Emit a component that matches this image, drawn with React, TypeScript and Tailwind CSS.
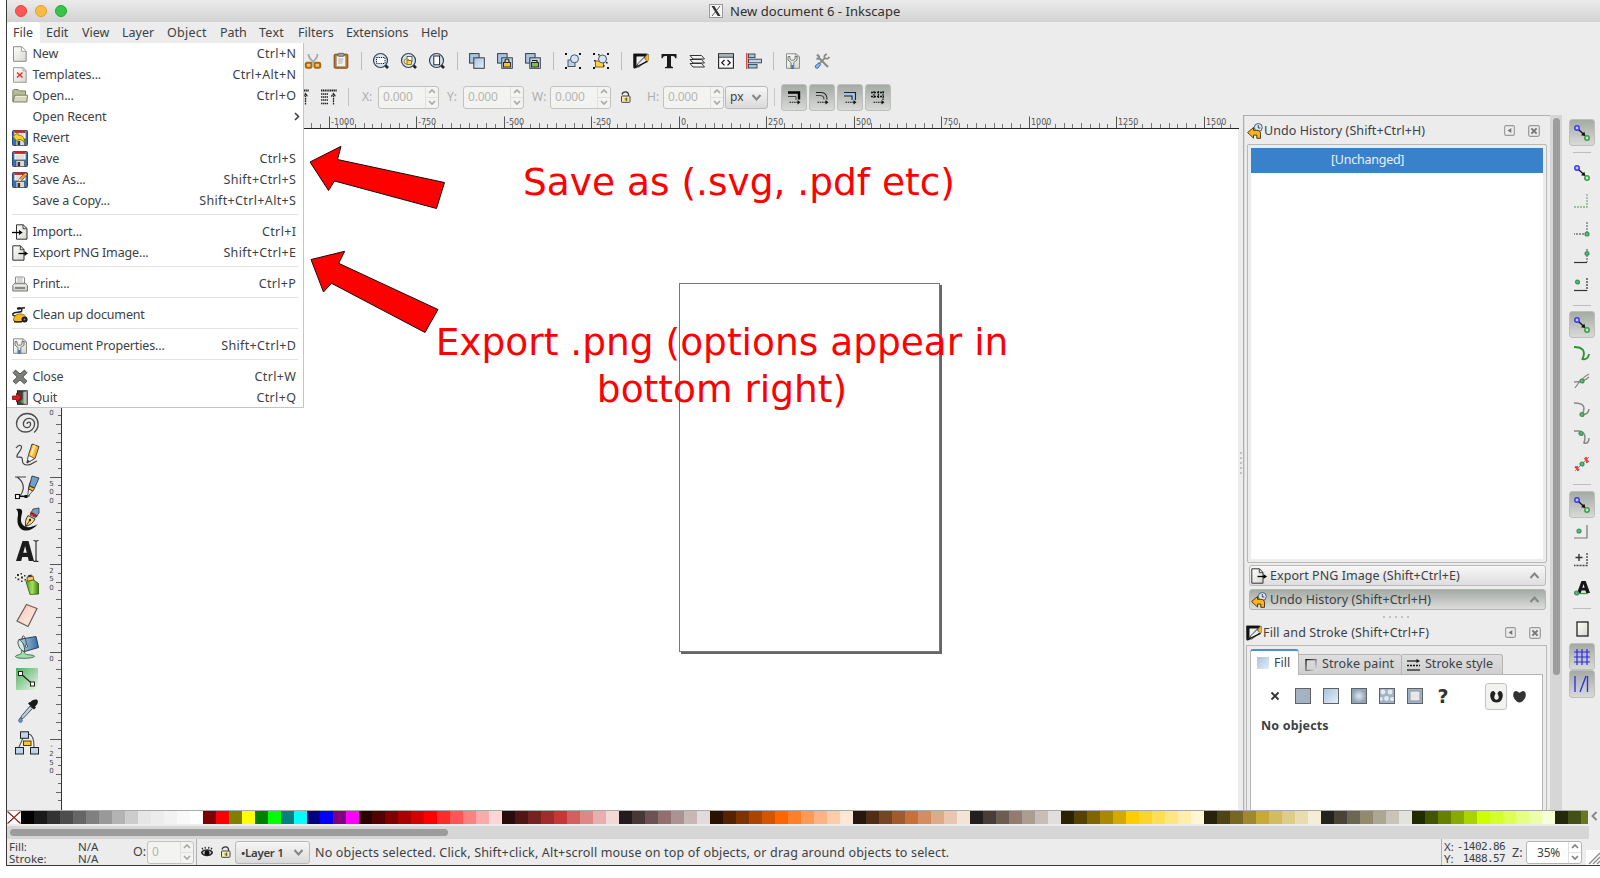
import React from 'react';
import type { ReactNode } from 'react';

/* ---------- drawing helpers ---------- */

function Svg({ s = 16, vb = 16, children }: { s?: number; vb?: number; children: ReactNode }) {
  return (
    <svg width={s} height={s} viewBox={`0 0 ${vb} ${vb}`} fill="none" className="block shrink-0 overflow-visible">
      {children}
    </svg>
  );
}

const Gradients = () => (
  <svg width="0" height="0" className="absolute">
    <defs>
      <linearGradient id="blue" x1="0" y1="0" x2="1" y2="1">
        <stop offset="0" stopColor="#a9c2dc" />
        <stop offset="1" stopColor="#e4eef8" />
      </linearGradient>
      <linearGradient id="page" x1="0" y1="0" x2="1" y2="1">
        <stop offset="0" stopColor="#fff" />
        <stop offset="1" stopColor="#d6d6d0" />
      </linearGradient>
      <linearGradient id="green" x1="0" y1="0" x2="1" y2="1">
        <stop offset="0" stopColor="#4fae5c" />
        <stop offset="1" stopColor="#eaf7ea" />
      </linearGradient>
      <linearGradient id="spray" x1="0" y1="0" x2="1" y2="0">
        <stop offset="0" stopColor="#4f9a1c" />
        <stop offset="0.5" stopColor="#a5e060" />
        <stop offset="1" stopColor="#3c8210" />
      </linearGradient>
      <linearGradient id="ink" x1="0" y1="0" x2="1" y2="1">
        <stop offset="0" stopColor="#000" />
        <stop offset="0.6" stopColor="#333" />
        <stop offset="1" stopColor="#fff" />
      </linearGradient>
      <linearGradient id="skin" x1="0" y1="0" x2="1" y2="1">
        <stop offset="0" stopColor="#f8c8b8" />
        <stop offset="1" stopColor="#fdeee8" />
      </linearGradient>
      <linearGradient id="bucket" x1="0" y1="0" x2="1" y2="0">
        <stop offset="0" stopColor="#b9d6ea" />
        <stop offset="1" stopColor="#2f6da0" />
      </linearGradient>
      <linearGradient id="frame" x1="0" y1="0" x2="1" y2="1">
        <stop offset="0" stopColor="#111" />
        <stop offset="1" stopColor="#ddd" />
      </linearGradient>
      <radialGradient id="radial">
        <stop offset="0" stopColor="#dfe8f2" />
        <stop offset="1" stopColor="#8fa1b5" />
      </radialGradient>
    </defs>
  </svg>
);

/* ---------- menu icons ---------- */

const NewIcon = () => (
  <Svg>
    <path d="M1.5.7h8.3l4.4 4.4v10.2H1.5z" fill="url(#page)" stroke="#8b8d88" />
    <path d="M9.6.9v4.4h4.4" fill="#fff" stroke="#9a9c97" strokeWidth=".9" />
  </Svg>
);
const TemplateIcon = () => (
  <Svg>
    <path d="M1.5.7h9.8l2.9 2.9v11.7H1.5z" fill="url(#page)" stroke="#9a9c97" />
    <path d="M11 .9v3h3" stroke="#9a9c97" strokeWidth=".8" />
    <path d="M5 5.5l5.5 5M10.5 5.5L5 10.5" stroke="#f03030" strokeWidth="1.5" />
  </Svg>
);
const FolderIcon = () => (
  <Svg>
    <path d="M.8 13.8V2.5l1-1h4.4l1 1.4h6.3V8" fill="#b8bc9a" stroke="#7c8062" />
    <path d="M2.6 7.2h12.9l-.6 6.8H1.2z" fill="#d3d6b8" stroke="#7c8062" />
    <path d="M3.4 8.4h11" stroke="#f0f1e2" />
  </Svg>
);
const Floppy = ({ children }: { children?: ReactNode }) => (
  <Svg>
    <rect x=".5" y=".5" width="15" height="15" rx="1" fill="#3d6fae" stroke="#254a7d" />
    <rect x="2.4" y=".9" width="11.2" height="7.6" fill="#f3f3f3" />
    <rect x="2.4" y=".5" width="11.2" height="2.4" fill="#d42020" />
    <path d="M4 5h8M4 7h8" stroke="#bbb" strokeWidth=".7" />
    <rect x="4" y="9.6" width="8.4" height="5.9" fill="#d8dadc" stroke="#555" strokeWidth=".7" />
    <rect x="5.6" y="11" width="2.5" height="4" fill="#333" />
    {children}
  </Svg>
);
const SaveIcon = () => <Floppy />;
const RevertIcon = () => (
  <Floppy>
    <path d="M1 6.500l5-4v2.700c4 0 6.500 1.500 6.500 7.800-1.500-3-3-3.500-6.500-3.500v2.600z" fill="#f4d428" stroke="#8c7a10" strokeWidth=".9" />
  </Floppy>
);
const SaveAsIcon = () => (
  <Floppy>
    <path d="M6.500 9.500l1-3L13.500.5l2 2-6 6z" fill="#eb9d3c" stroke="#6e4410" strokeWidth=".7" />
    <path d="M6.500 9.500l1-3 2 2z" fill="#fae3c0" />
  </Floppy>
);
const ImportIcon = () => (
  <Svg>
    <path d="M4.500.8h6.700l3.800 3.700v10.700H4.500z" fill="url(#page)" stroke="#333" />
    <path d="M11 .8v3.900h3.900" stroke="#333" strokeWidth=".9" />
    <path d="M0 8.500h8" stroke="#000" strokeWidth="1.300" />
    <path d="M7 6l3.700 2.500L7 11z" fill="#000" />
  </Svg>
);
const ExportIcon = () => (
  <Svg>
    <path d="M.8.8h7.700l3.500 3.700v10.700H.8z" fill="url(#page)" stroke="#333" />
    <path d="M8.300.8v3.900h3.700" stroke="#333" strokeWidth=".9" />
    <path d="M6.500 8.500h7" stroke="#000" strokeWidth="1.300" />
    <path d="M12.500 6l3.500 2.500-3.500 2.500z" fill="#000" />
  </Svg>
);
const PrintIcon = () => (
  <Svg>
    <path d="M3.500 7.500V1h8l1 1v5.500z" fill="#fafafa" stroke="#8b8d88" />
    <path d="M5 3h5.500M5 5h5.500" stroke="#999" strokeWidth=".8" />
    <path d="M.8 9.500l2-2.300h10.700l2 2.300v5.500H.8z" fill="#d2d4cf" stroke="#777974" />
    <path d="M3 12h10" stroke="#555" strokeWidth="1.200" />
    <path d="M1.500 9.700h13" stroke="#f5f5f5" />
  </Svg>
);
const VacuumIcon = () => (
  <Svg>
    <path d="M5 1.500l8-.8M10 1l-.5 3.500c-2 1-7 .5-8.500 2-1 2 1.500 3 4 2" stroke="#222" strokeWidth="1.500" />
    <path d="M5.500 1.500h3" stroke="#111" strokeWidth="2.200" />
    <path d="M1.500 13.500c0-4 3-7 7.500-6.500 4 .3 6 3 6 7l-10 1z" fill="#fbb917" stroke="#7a5400" strokeWidth=".8" />
    <circle cx="12.500" cy="12.600" r="3" fill="#1a1a1a" />
    <circle cx="12.500" cy="12.600" r="1" fill="#888" />
    <path d="M2 14.800h8" stroke="#222" strokeWidth="1.500" />
  </Svg>
);
const DocPropsIcon = () => (
  <Svg>
    <path d="M1.500.8h9.500l3.500 3v11.500h-13z" fill="url(#page)" stroke="#8b8d88" />
    <path d="M10.800.8v3h3.500" stroke="#8b8d88" strokeWidth=".8" />
    <path d="M3 3.500v3.600L6 9.500v6h2.800v-6L12 7V3.500L10 3.500V6L8.500 7.200H6.500L5 6V3.500z" fill="#e6e8e5" stroke="#696b67" strokeWidth=".9" />
    <path d="M6.200 12h2.300v3.500H6.200z" fill="#3b76d6" />
  </Svg>
);
const CloseXIcon = () => (
  <Svg>
    <path d="M3.500 1L8 5l4.500-4L15 3.800 10.800 8l4.200 4.200-2.700 2.600L8 11l-4.300 3.800L1 12.200 5.200 8 1 3.800z" fill="#7c7e79" stroke="#4b4d49" strokeWidth=".9" />
  </Svg>
);
const QuitIcon = () => (
  <Svg>
    <rect x="5.500" y=".8" width="9.700" height="13.500" fill="#3f413d" stroke="#222" />
    <path d="M11 2l4-1v14l-4-1.500z" fill="#b9bbb6" stroke="#666" strokeWidth=".7" />
    <path d="M8 12l3-3v4.500z" fill="#4f9a3c" />
    <path d="M.5 6h4V3.200L9.500 7.500l-5 4.500V9.500h-4z" fill="#e01b1b" stroke="#7d0b0b" strokeWidth=".8" />
  </Svg>
);

/* ---------- command bar icons ---------- */

const CutIcon = () => (
  <Svg>
    <path d="M3.500 1c0 4 3 7 7 9.500M12.500 1c0 4-3 7-7 9.500" stroke="#a9aba8" strokeWidth="1.800" />
    <rect x=".8" y="9.800" width="5.700" height="5" rx="1.500" stroke="#a8690c" strokeWidth="2" fill="#ecc37c" />
    <rect x="9.500" y="9.800" width="5.700" height="5" rx="1.500" stroke="#a8690c" strokeWidth="2" fill="#ecc37c" />
  </Svg>
);
const PasteIcon = () => (
  <Svg>
    <rect x="1.200" y="1.200" width="13.600" height="14" rx="1" fill="#b9782a" stroke="#7c4c10" />
    <path d="M3.500 3h9v10.500h-9z" fill="#f2f2ee" stroke="#999" strokeWidth=".6" />
    <path d="M5.200 6h5M5.200 8h5M5.200 10h4" stroke="#999" strokeWidth=".8" />
    <rect x="5" y=".3" width="6" height="3" rx="1" fill="#a0a29e" stroke="#555" strokeWidth=".7" />
  </Svg>
);
const ZoomBase = ({ children }: { children: ReactNode }) => (
  <Svg>
    <path d="M11.500 11.500l3.500 3.500" stroke="#222" strokeWidth="2.600" />
    <circle cx="7.500" cy="7.500" r="7" fill="#d7e5f2" stroke="#33414e" strokeWidth="1.200" />
    {children}
  </Svg>
);
const ZoomSel = () => (
  <ZoomBase>
    <rect x="3.500" y="4.500" width="8.500" height="6" stroke="#111" strokeDasharray="1.200 1" fill="#fff" />
  </ZoomBase>
);
const ZoomDraw = () => (
  <ZoomBase>
    <rect x="6" y="3.500" width="5" height="5" fill="#fff" stroke="#444" strokeWidth=".8" />
    <circle cx="5.600" cy="8.500" r="2.600" fill="#fce9b0" stroke="#a06c00" strokeWidth=".9" />
    <rect x="6" y="7.500" width="4.500" height="4" fill="#fbd25c" stroke="#8c5e00" strokeWidth=".8" />
  </ZoomBase>
);
const ZoomPage = () => (
  <ZoomBase>
    <rect x="4.800" y="3" width="5.800" height="8.800" fill="#fff" stroke="#222" />
  </ZoomBase>
);
const Dup = ({ children }: { children?: ReactNode }) => (
  <Svg>
    <rect x=".6" y=".6" width="9.500" height="9.500" fill="#a9c4de" stroke="#333f4a" />
    <rect x="4.800" y="4.800" width="10.500" height="10.500" fill="url(#blue)" stroke="#333f4a" />
    {children}
  </Svg>
);
const DupLock = () => (
  <Dup>
    <path d="M8 9.500V8a2 2 0 014 0v1.500" stroke="#222" strokeWidth="1.200" />
    <rect x="6.500" y="9.500" width="7" height="4.500" fill="#f9c52e" stroke="#222" strokeWidth=".9" />
  </Dup>
);
const DupUnlock = () => (
  <Dup>
    <path d="M7 7.500h5v2" stroke="#222" strokeWidth="1.200" />
    <rect x="6.500" y="9.500" width="7" height="4.500" fill="#7cc04a" stroke="#222" strokeWidth=".9" />
  </Dup>
);
const corners = 'M0 0h2v2H0zM14 0h2v2h-2zM0 14h2v2H0zM14 14h2v2h-2z';
const GroupIcon = () => (
  <Svg>
    <rect x="3" y="7" width="7" height="6.500" fill="#bcd2e8" stroke="#44586c" />
    <circle cx="9.500" cy="5.800" r="4" fill="#d5e4f2" stroke="#44586c" />
    <path d={corners} fill="#111" />
  </Svg>
);
const UngroupIcon = () => (
  <Svg>
    <rect x="2.500" y="8" width="8" height="6" fill="#fbd34a" stroke="#8c6400" />
    <circle cx="9.500" cy="6" r="4" fill="#d5e4f2" stroke="#44586c" />
    <path d={corners} fill="#111" />
    <path d="M5 1h1.600v1.600H5zM1 7h1.600v1.600H1zM13 9h1.600v1.600H13zM10 12h1.600v1.600H10z" fill="#222" />
  </Svg>
);
const FillStrokeIcon = () => (
  <Svg>
    <path d="M.5.8h14.500L3 15.300H.5z" fill="url(#ink)" />
    <path d="M.5.8h13l-2 2H3v9l-2.500 3z" fill="#111" />
    <path d="M3.500 3.500h8l-8 9z" fill="#eceff2" />
    <path d="M5 10.500l6-6 3 3-8 6.500H3.500z" fill="#e8ecf0" stroke="#333" strokeWidth=".8" />
    <path d="M12 4.500L15.500 1v6.500l-2 1z" fill="#f5b921" stroke="#76560a" strokeWidth=".5" />
    <path d="M1 15c4-2 8-4 13.500-6.700" stroke="#111" strokeWidth="1.300" />
  </Svg>
);
const TextIcon = () => (
  <Svg>
    <path d="M.5 1h15v4.200h-1.300c-.3-1.500-1-2.200-2.400-2.200H10v9.500c0 1 .5 1.400 2 1.500v1.200H4V14c1.500 0 2-.5 2-1.500V3H4.200C2.800 3 2.100 3.700 1.800 5.200H.5z" fill="#1b1b1b" />
  </Svg>
);
const LayersIcon = () => (
  <Svg>
    <path d="M1 10.500l3 3.500h11.500l-3-3.500zM1 6.500l3 3.500h11.500l-3-3.500zM1 2.500L4 6h11.500l-3-3.500z" fill="#f4f4f4" stroke="#333" strokeWidth="1" />
  </Svg>
);
const XmlIcon = () => (
  <Svg>
    <rect x=".6" y=".8" width="14.800" height="14.400" fill="#f8f8f8" stroke="#222" strokeWidth="1.100" />
    <path d="M1.200 2.800h13.600" stroke="#9fb8d2" strokeWidth="2" />
    <path d="M1 4.200h14" stroke="#222" strokeWidth=".9" />
    <path d="M6.500 7L3.800 9.700l2.700 2.700M9.500 7l2.700 2.700-2.700 2.700" stroke="#111" strokeWidth="1.200" />
  </Svg>
);
const AlignIcon = () => (
  <Svg>
    <path d="M.8 0v16" stroke="#e02020" strokeWidth="1.200" />
    <rect x="2.500" y="1" width="6.500" height="3.600" fill="#a9c2dc" stroke="#333f4a" strokeWidth=".9" />
    <rect x="2.500" y="6.200" width="13" height="3.600" fill="#c2d5e8" stroke="#333f4a" strokeWidth=".9" />
    <rect x="2.500" y="11.400" width="8.500" height="3.600" fill="#a9c2dc" stroke="#333f4a" strokeWidth=".9" />
  </Svg>
);
const ToolsIcon = () => (
  <Svg>
    <path d="M3 1.500l2 2-.5 2-2 .3M4.500 4.500l9.500 9.500" stroke="#8b8d89" strokeWidth="2.200" />
    <path d="M13 1.200c-3 .5-3 2.300-2.300 4L4 12M11 5.200c1.700.8 3.500.8 4.200-1.500" stroke="#888a86" strokeWidth="1.700" />
    <path d="M1.500 12.500L5 9.800l1.700 1.700L4 15c-2 .8-3.300-.5-2.500-2.500z" fill="#8fb6ea" stroke="#2c5da4" strokeWidth=".9" />
  </Svg>
);
const StackIcon = () => (
  <Svg>
    <path d="M0 1.500h16" stroke="#222" strokeWidth="2.200" strokeDasharray="1.300 .5" />
    <path d="M0 5h7M0 8h7M0 11h7M0 14.500h7" stroke="#222" strokeWidth="1.600" strokeDasharray="1.400 .5" />
    <path d="M12.500 15.500V5M10.300 7.500l2.200-3 2.200 3" stroke="#222" strokeWidth="1.300" strokeDasharray="1.800 .6" />
  </Svg>
);
const LockIcon = () => (
  <Svg s={12} vb={12}>
    <path d="M2 3.500c.5-2 2-2.700 3.500-2.700 2 0 3 1 3 3V5" stroke="#333" strokeWidth="1.200" />
    <rect x="1.500" y="5" width="8.500" height="6.300" rx=".6" fill="#f7ecb0" stroke="#444" strokeWidth="1" />
    <rect x="4.600" y="7" width="1.600" height="2.500" fill="#c49a10" />
    <path d="M6.700 6.500v3.500" stroke="#333" strokeWidth=".9" />
  </Svg>
);
const affect: ReactNode[] = [
  <>
    <path d="M1 2.500h11v7" stroke="#000" strokeWidth="2.400" />
    <path d="M1 6.500h8V10" stroke="#444" strokeWidth="1" />
  </>,
  <>
    <path d="M1 2.500h5c4 0 6 3 6 7" stroke="#222" strokeWidth="1.200" />
    <path d="M1 5.500h4c3 0 4 2 4 4" stroke="#444" strokeWidth="1.200" />
  </>,
  <>
    <path d="M1 2.500h11v7.500H9V6H1z" fill="#9fc0e8" />
    <path d="M1 2.500h11.500V10M1 6h8v4" stroke="#222" strokeWidth="1.100" />
  </>,
  <>
    <path d="M0 2.500h13M0 6.500h13" stroke="#111" strokeWidth="1.700" strokeDasharray="2 1" />
    <path d="M3 1v7M7.500 1v7M12 1v9" stroke="#111" strokeWidth="1.200" strokeDasharray="2 .7" />
  </>,
];
const AffectIcon = ({ i }: { i: number }) => (
  <Svg s={14} vb={14}>
    {affect[i]}
    <path d="M2.500 12.200h9" stroke="#111" strokeWidth="1.100" strokeDasharray="1.500 .8" />
    <path d="M10.500 10l3 2.200-3 2.200z" fill="#111" />
  </Svg>
);
const HistoryIcon = () => (
  <Svg>
    <circle cx="11.300" cy="4.500" r="4" fill="#d5e4f6" stroke="#4c5d74" />
    <path d="M11.300 2v3h2" stroke="#222" strokeWidth=".8" />
    <path d="M.6 9.500L6.500 4.500v2.800h3c2.500 0 4 1.200 4 3v5H9.800v-3.200H6.500v3z" fill="#fbb41c" stroke="#3d2c00" strokeWidth=".9" />
  </Svg>
);

/* ---------- toolbox icons (24px) ---------- */

const toolbox: { key: string; h: string; icon: ReactNode }[] = [
  {
    key: 'spiral',
    h: 'h-[30px]',
    icon: (
      <path
        d="M12 12a1.800 1.800 0 0 1 3.600 0a3.600 3.600 0 0 1-7.200 0a5.600 5.600 0 0 1 11.200 0a9.050 8 0 0 1-18.100 0a10.800 10.500 0 0 1 21.600 0c0 3-1 6-4 8.500"
        stroke="#4a4a4a"
        strokeWidth="1.300"
      />
    ),
  },
  {
    key: 'pencil',
    h: 'h-[32px]',
    icon: (
      <>
        <path d="M1 5c3-4 7-3 5 1s-5 6-4 8c1 1 4-1 5 1s-1 7 5 7c5 0 6-3 10-4" stroke="#444" strokeWidth="1.200" />
        <path d="M12 20l1.500-8L17 1l7 2.500-4 12z" fill="#fbb62a" stroke="#333" strokeWidth=".9" />
        <path d="M15 12L18.500 2l2.500.8-4 10z" fill="#fde9a0" />
        <path d="M12 20l1.500-7.500 6 3z" fill="#fff" stroke="#444" strokeWidth=".7" />
        <path d="M12 20l.8-3 2 1z" fill="#222" />
      </>
    ),
  },
  {
    key: 'bezier',
    h: 'h-[32px]',
    icon: (
      <>
        <path d="M0 2h11M2 2c6 4 9 11 3 19h9c-1-6-1-10 2-15" stroke="#444" strokeWidth="1.200" />
        <rect x=".5" y="19.500" width="4" height="4" fill="#fff" stroke="#111" strokeWidth="1.100" />
        <path d="M5 21.500h5" stroke="#111" strokeWidth="1.100" />
        <rect x="9.500" y="20" width="3" height="3" fill="#111" />
        <path d="M14.500 10.500L17 1l7 2-4.500 10z" fill="#6ba2cf" stroke="#333" strokeWidth=".9" />
        <path d="M14.500 11l5 2.500-1.500 2.500-4.500-2z" fill="#fbb62a" stroke="#333" strokeWidth=".8" />
        <path d="M13.500 14l4 2-5 6z" fill="#f4f4f4" stroke="#333" strokeWidth=".8" />
      </>
    ),
  },
  {
    key: 'calligraphy',
    h: 'h-[32px]',
    icon: (
      <>
        <path d="M1 2c4-1 7 0 6 4-1 5-2 9 1 12 3 3 8 3 15-1-5 6-12 8.500-17 5-4-3.500-4-9-3-14 0-3 0-4-2-6z" fill="#111" />
        <path d="M15 8l3-6 6-1v5l-3.500 4.500z" fill="#6ba2cf" stroke="#333" strokeWidth=".8" />
        <path d="M15.500 5.500l6.500 4" stroke="#b91818" strokeWidth="2.500" />
        <path d="M13 8.500c-2 3-3 5.500-2.500 11 5-1.500 8-4 9.500-7.500z" fill="#fbd98a" stroke="#222" strokeWidth=".9" />
        <path d="M11 19l4-6" stroke="#222" strokeWidth=".9" />
        <circle cx="15" cy="13" r="1.200" fill="#222" />
      </>
    ),
  },
  {
    key: 'text',
    h: 'h-[32px]',
    icon: (
      <>
        <path d="M1 22L7.500 2h6L19 22h-5.200l-1-4H7.200l-1 4zM8.300 13.800h3.500L10.100 7z" fill="#1c1c1c" fillRule="evenodd" />
        <path d="M21 2.500v19M18.500 1.500c1.500 0 2.500.5 2.500 1 0-.5 1-1 2.500-1M18.500 22.500c1.500 0 2.500-.5 2.500-1 0 .5 1 1 2.500 1" stroke="#222" strokeWidth="1.100" />
      </>
    ),
  },
  {
    key: 'spray',
    h: 'h-[32px]',
    icon: (
      <>
        <path d="M11 10.500c2-3 7-3 9-.5l3.500 2.500V23l-8.500.500z" fill="url(#spray)" stroke="#2f5a10" strokeWidth=".8" />
        <path d="M12 6l6-1 .8 4-6.500 1.200z" fill="#f5c65a" stroke="#533a08" strokeWidth=".8" />
        <path d="M13 4.300l3.500-.8.400 2-3.500.8z" fill="#333" />
        <path d="M2 3h2v2H2zM5.500 2h1.500v1.500H5.500zM6 5.500h2v2H6zM2.500 7.500h1.800v1.800H2.500zM9 4h1.500v1.500H9zM6 9.500h1.500V11H6zM9.500 8H11v1.500H9.500zM0 6h1.200v1.200H0z" fill="#333" />
      </>
    ),
  },
  {
    key: 'eraser',
    h: 'h-[32px]',
    icon: <path d="M11.500 1.500l10.500 4-9 18L2 18z" fill="url(#skin)" stroke="#6c5a54" strokeWidth="1.200" />,
  },
  {
    key: 'bucket',
    h: 'h-[32px]',
    icon: (
      <>
        <path d="M7 15c-1 3 0 4-4 5-4 1-4 3.300 6 3.300s14-2.500 7-3.300c-4-.5-6 0-6.500-3z" fill="#9fdcae" stroke="#3c6a48" strokeWidth=".9" />
        <path d="M4 4.500l17-3 2.500 11L9.500 16.500z" fill="url(#bucket)" stroke="#2d3f4f" strokeWidth="1" />
        <path d="M4 4.500c-3 3 1 11.500 5.500 12C10 11 7.500 6 4 4.500z" fill="#d5ecd9" stroke="#2d3f4f" strokeWidth=".9" />
        <path d="M7 5c0-7 4-5 4.500 6" stroke="#444" strokeWidth="1" />
        <circle cx="11.500" cy="11" r="1.300" fill="#eee" stroke="#333" strokeWidth=".8" />
      </>
    ),
  },
  {
    key: 'gradient',
    h: 'h-[32px]',
    icon: (
      <>
        <rect x="1" y="1" width="22" height="22" fill="url(#green)" />
        <path d="M5.500 6.500l12 10.500" stroke="#222" strokeWidth="1.100" />
        <rect x="3.500" y="4.500" width="4" height="4" fill="#fff" stroke="#222" />
        <rect x="15.500" y="15" width="4" height="4" fill="#fff" stroke="#222" />
      </>
    ),
  },
  {
    key: 'dropper',
    h: 'h-[32px]',
    icon: (
      <>
        <path d="M15 3.500c2-2.500 5-3.500 7.500-2.500 1 2.500 0 4.500-2.500 6.500l1 1-2 2-6-6 1.500-1.500z" fill="#1a1a1a" />
        <path d="M15 7l2.500 2.500-9 9.500-3 1.500 1-3.500z" fill="#b7cfe4" stroke="#444" strokeWidth=".9" />
        <path d="M5.500 18.500c-1.800 2-2 2.800-1.600 4 .5 1 2.500 1 3.200 0 .4-1.200 0-2-1.600-4z" fill="#6e9ad0" stroke="#2c4a74" strokeWidth=".8" />
      </>
    ),
  },
  {
    key: 'connector',
    h: 'h-[32px]',
    icon: (
      <>
        <path d="M8 7L4 16M14 3c4 1 5 7 5 13" stroke="#555" strokeWidth="1.100" />
        <rect x="5.500" y=".8" width="8" height="6.500" fill="#bcd5ec" stroke="#222" />
        <rect x="8.500" y="10" width="7.500" height="4.500" fill="#fbc52c" stroke="#543c00" />
        <rect x=".5" y="16.500" width="8" height="6.500" fill="#bcd5ec" stroke="#222" />
        <rect x="15.500" y="16.500" width="8" height="6.500" fill="#bcd5ec" stroke="#222" />
      </>
    ),
  },
];

/* ---------- data ---------- */

type Item = { label: string; keys?: string; icon?: ReactNode; sub?: boolean } | 'sep';

const fileMenu: Item[] = [
  { label: 'New', keys: 'Ctrl+N', icon: <NewIcon /> },
  { label: 'Templates...', keys: 'Ctrl+Alt+N', icon: <TemplateIcon /> },
  { label: 'Open...', keys: 'Ctrl+O', icon: <FolderIcon /> },
  { label: 'Open Recent', sub: true },
  { label: 'Revert', icon: <RevertIcon /> },
  { label: 'Save', keys: 'Ctrl+S', icon: <SaveIcon /> },
  { label: 'Save As...', keys: 'Shift+Ctrl+S', icon: <SaveAsIcon /> },
  { label: 'Save a Copy...', keys: 'Shift+Ctrl+Alt+S' },
  'sep',
  { label: 'Import...', keys: 'Ctrl+I', icon: <ImportIcon /> },
  { label: 'Export PNG Image...', keys: 'Shift+Ctrl+E', icon: <ExportIcon /> },
  'sep',
  { label: 'Print...', keys: 'Ctrl+P', icon: <PrintIcon /> },
  'sep',
  { label: 'Clean up document', icon: <VacuumIcon /> },
  'sep',
  { label: 'Document Properties...', keys: 'Shift+Ctrl+D', icon: <DocPropsIcon /> },
  'sep',
  { label: 'Close', keys: 'Ctrl+W', icon: <CloseXIcon /> },
  { label: 'Quit', keys: 'Ctrl+Q', icon: <QuitIcon /> },
];

const menus: [string, string][] = [
  ['File', 'w-[33px] bg-white rounded-t-[4px]'],
  ['Edit', 'w-[36px]'],
  ['View', 'w-[40px]'],
  ['Layer', 'w-[45px]'],
  ['Object', 'w-[53px] tracking-[0.25px]'],
  ['Path', 'w-[39px]'],
  ['Text', 'w-[39px] tracking-[0.25px]'],
  ['Filters', 'w-[48px]'],
  ['Extensions', 'w-[75px] tracking-[-0.1px]'],
  ['Help', 'w-[37px]'],
];

const palette = (
  '000000 1a1a1a 333333 4d4d4d 666666 808080 999999 b3b3b3 cccccc e6e6e6 ececec f2f2f2 f9f9f9 ffffff ' +
  '800000 ff0000 808000 ffff00 008000 00ff00 008080 00ffff 000080 0000ff 800080 ff00ff ' +
  '2b0000 550000 800000 aa0000 d40000 ff0000 ff2a2a ff5555 ff8080 ffaaaa ffd5d5 ' +
  '280b0b 501616 782121 a02c2c c83737 d35f5f de8787 e9afaf f4d7d7 ' +
  '241c1c 483737 6c5353 916f6f ac9393 c8b7b7 e3dbdb ' +
  '2b1100 552200 803300 aa4400 d45500 ff6600 ff7f2a ff9955 ffb380 ffccaa ffe6d5 ' +
  '28170b 502d16 784421 a05a2c c87137 d38d5f deaa87 e9c6af f4e3d7 ' +
  '241f1c 483e37 6c5d53 917c6f ac9d93 c8beb7 e3dedb ' +
  '2b2200 554400 806600 aa8800 d4aa00 ffcc00 ffd42a ffdd55 ffe680 ffeeaa fff6d5 ' +
  '28220b 504416 786721 a0892c c8ab37 d3bc5f decd87 e9ddaf f4eed7 ' +
  '24221c 484537 6c6753 918a6f aca793 c8c4b7 e3e2db ' +
  '222b00 445500 668000 88aa00 aad400 ccff00 d4ff2a ddff55 e5ff80 eeffaa f6ffd5 ' +
  '23280b 445016 677821'
).split(' ');

/* ---------- small widgets ---------- */

const Slot = ({ children }: { children?: ReactNode }) => (
  <div className="flex w-[28.25px] shrink-0 items-center justify-center">{children}</div>
);
const BarSep = () => (
  <div className="flex w-[11.3px] shrink-0 justify-center">
    <div className="h-[18px] w-px bg-[#bdbdbd]" />
  </div>
);

function Spin({ value, w, live = false, pad = 'pl-[4px]' }: { value: string; w: string; live?: boolean; pad?: string }) {
  return (
    <div
      className={`flex h-[23px] shrink-0 items-stretch rounded-[3px] border ${w} ${
        live ? 'border-[#b4b4b4] bg-white text-[#3c4144]' : 'border-[#c2c2be] bg-[#f3f3f1] text-[#b6b6b3]'
      }`}
    >
      <span className={`flex-1 self-center text-[12px] tracking-[-0.2px] ${pad}`}>{value}</span>
      <span className="flex w-[13px] flex-col items-center justify-evenly border-l border-[#e0e0e0]">
        <svg width="8" height="5" viewBox="0 0 8 5" fill="none">
          <path d="M1 4l3-3 3 3" stroke={live ? '#808080' : '#a9a9a9'} strokeWidth="1.700" />
        </svg>
        <span className="h-px w-full bg-[#e0e0e0]" />
        <svg width="8" height="5" viewBox="0 0 8 5" fill="none">
          <path d="M1 1l3 3 3-3" stroke={live ? '#808080' : '#a9a9a9'} strokeWidth="1.700" />
        </svg>
      </span>
    </div>
  );
}

const Chevron = () => (
  <svg width="11" height="7" viewBox="0 0 11 7" fill="none">
    <path d="M1.500 1l4 4.500 4-4.500" stroke="#858585" strokeWidth="2" />
  </svg>
);

const pressed = 'rounded-[3px] border border-[#bcbfbc] bg-linear-to-b from-[#a5aaa5] to-[#d8dad8]';

function TitleButtons() {
  return (
    <div className="flex gap-[13px]">
      <svg width="11" height="11" viewBox="0 0 12 12" fill="none">
        <rect x=".7" y=".7" width="10.600" height="10.600" rx="1.500" stroke="#999" strokeWidth="1.200" />
        <path d="M8 3.200v5.600L3.800 6z" fill="#777" />
      </svg>
      <svg width="12" height="12" viewBox="0 0 12 12" fill="none">
        <rect x=".7" y=".7" width="10.600" height="10.600" rx="1.500" stroke="#999" strokeWidth="1.200" />
        <path d="M3.400 3.400l5.200 5.200M8.600 3.400L3.400 8.600" stroke="#777" strokeWidth="2" />
      </svg>
    </div>
  );
}

/* ---------- rulers ---------- */

function HRuler() {
  const step = 8.75;
  const ticks: ReactNode[] = [];
  for (let i = -70; i <= 64; i++) {
    const x = Math.round(616.5 + i * step) + 0.5;
    if (x < 0 || x > 1176) continue;
    const major = i % 10 === 0;
    ticks.push(<path key={i} d={`M${x} 13V${major ? 1.5 : i % 2 === 0 ? 8 : 9}`} stroke={major ? '#555' : '#777'} />);
    if (major && x < 1170)
      ticks.push(
        <text key={`t${i}`} x={x + 1.5} y="9.500" fontSize="8" fill="#555" className="font-['DejaVu_Sans']">
          {i * 25}
        </text>,
      );
  }
  return (
    <svg width="1177" height="14" viewBox="0 0 1177 14" className="block">
      {ticks}
      <path d="M0 13.500h1177" stroke="#222" />
    </svg>
  );
}

function VRuler() {
  const step = 8.75;
  const ticks: ReactNode[] = [];
  for (let i = -18; i <= 59; i++) {
    const y = Math.round(522.5 - i * step) + 0.5;
    if (y < 0 || y > 680) continue;
    const major = i % 10 === 0;
    ticks.push(<path key={i} d={`M14 ${y}H${major ? 3 : i % 2 === 0 ? 9 : 11}`} stroke={major ? '#555' : '#666'} />);
    if (major)
      String(i * 25)
        .split('')
        .forEach((c, k) =>
          ticks.push(
            <text key={`t${i}-${k}`} x="4.500" y={y + 8 + k * 8.5} fontSize="7" textAnchor="middle" fill="#444" className="font-['DejaVu_Sans']">
              {c}
            </text>,
          ),
        );
  }
  return (
    <svg width="15" height="681" viewBox="0 0 15 681" className="block">
      {ticks}
      <path d="M14.500 0v681" stroke="#333" />
    </svg>
  );
}

/* ---------- snap bar ---------- */

const NodePair = () => (
  <>
    <path d="M4.500 4.500l6 5.500" stroke="#111" strokeWidth="1.300" />
    <path d="M11.500 11l-4.500-.8 3.300-3.500z" fill="#111" />
    <circle cx="3" cy="3" r="2.200" fill="#c8c8ff" stroke="#3a3aee" strokeWidth="1.500" />
    <circle cx="13" cy="13" r="2.200" fill="#c4e8c4" stroke="#3c9c48" strokeWidth="1.500" />
  </>
);
const GreenDot = ({ x, y }: { x: number; y: number }) => (
  <circle cx={x} cy={y} r="1.900" fill="#7b9ec0" stroke="#3c9c48" strokeWidth="1.400" />
);

const snapItems: { on?: boolean; sep?: boolean; h?: string; el?: ReactNode }[] = [
  { on: true, h: 'h-[27px]', el: <NodePair /> },
  { sep: true, h: 'h-[13px]' },
  { h: 'h-[28px]', el: <NodePair /> },
  { h: 'h-[28px]', el: <path d="M13 1v13H0" stroke="#7db482" strokeWidth="1.300" strokeDasharray="2 1" /> },
  {
    h: 'h-[28px]',
    el: (
      <>
        <path d="M13 1v12H0" stroke="#777" strokeWidth="1.300" strokeDasharray="2 1" />
        <GreenDot x={13} y={13} />
      </>
    ),
  },
  {
    h: 'h-[28px]',
    el: (
      <>
        <path d="M13 0v13" stroke="#666" strokeWidth="1.200" strokeDasharray="2 1" />
        <path d="M0 13.500h13" stroke="#333" strokeWidth="1.200" />
        <GreenDot x={13} y={4.500} />
      </>
    ),
  },
  {
    h: 'h-[28px]',
    el: (
      <>
        <path d="M13 1v12.500" stroke="#333" strokeWidth="1.200" strokeDasharray="2 1" />
        <path d="M0 13.500h13" stroke="#333" strokeWidth="1.200" />
        <GreenDot x={3.5} y={5} />
      </>
    ),
  },
  { sep: true, h: 'h-[12px]' },
  { on: true, h: 'h-[27px]', el: <NodePair /> },
  { h: 'h-[29px]', el: <path d="M0 2c9 0 12 4 8.500 12 3.500 1 6-1 6.500-5" stroke="#2f9438" strokeWidth="1.900" /> },
  {
    h: 'h-[28px]',
    el: (
      <>
        <path d="M0 9c7 0 11-1 15-5M1 15C5 9 9 4 15 1" stroke="#888" strokeWidth="1.300" />
        <GreenDot x={8} y={8} />
      </>
    ),
  },
  {
    h: 'h-[28px]',
    el: (
      <>
        <path d="M0 2c9 0 12 3 8.500 11 3.500 1 6-1 6.500-5" stroke="#888" strokeWidth="1.500" />
        <GreenDot x={8} y={13.5} />
      </>
    ),
  },
  {
    h: 'h-[27px]',
    el: (
      <>
        <path d="M0 2h5c6 1 7 5 5 12 3 1 5-1 5-5" stroke="#888" strokeWidth="1.500" />
        <GreenDot x={7} y={4.5} />
      </>
    ),
  },
  {
    h: 'h-[28px]',
    el: (
      <>
        <path d="M1 15l14-14" stroke="#888" strokeWidth="1" />
        <path d="M1 10.500l4 4M3 10l1 5M10.500 2l4 4M12 1l1 6" stroke="#e04848" strokeWidth="1.900" />
        <GreenDot x={8} y={8} />
      </>
    ),
  },
  { sep: true, h: 'h-[13px]' },
  { on: true, h: 'h-[27px]', el: <NodePair /> },
  {
    h: 'h-[28px]',
    el: (
      <>
        <path d="M13 1v13H0" stroke="#777" strokeWidth="1.200" />
        <GreenDot x={5} y={7} />
      </>
    ),
  },
  {
    h: 'h-[28px]',
    el: (
      <>
        <path d="M13 1v12.500H0" stroke="#444" strokeWidth="1.300" strokeDasharray="2 1" />
        <path d="M5 2v7M1.500 5.500h7" stroke="#333" strokeWidth="1.400" />
      </>
    ),
  },
  {
    h: 'h-[28px]',
    el: (
      <>
        <path d="M3 13L7.500 1h4.200L16 13h-3.800l-.8-2.500H7.500L6.800 13zM8.400 7.800h2.200L9.500 4z" fill="#161616" fillRule="evenodd" />
        <path d="M2 13.500h12" stroke="#3c9c48" strokeWidth="1.300" />
        <GreenDot x={2.500} y={13} />
      </>
    ),
  },
  { sep: true, h: 'h-[13px]' },
  { h: 'h-[28px]', el: <rect x="3" y="1" width="11" height="14" fill="url(#page)" stroke="#222" strokeWidth="1.300" /> },
  { on: true, h: 'h-[27px]', el: <path d="M0 3h16M0 8h16M0 13h16M3 0v16M8 0v16M13 0v16" stroke="#2a2af0" strokeWidth="1.200" /> },
  { on: true, h: 'h-[28px]', el: <path d="M1 0v16M13.500 0v16M6 16l6-16" stroke="#2a2af0" strokeWidth="1.300" /> },
];

/* ---------- page ---------- */

const PaintSwatch = ({ children }: { children?: ReactNode }) => (
  <svg width="18" height="18" viewBox="0 0 18 18" fill="none">
    <rect x="1" y="1" width="16" height="16" fill="#a4b3c4" />
    {children}
    <rect x="1.500" y="1.500" width="15" height="15" stroke="#7a7f86" strokeWidth="1" />
    <rect x="1.500" y="1.500" width="15" height="15" stroke="#444" strokeDasharray="1 1" strokeWidth="1" />
  </svg>
);

const tabBase = 'flex items-center border border-[#b5b5b5] border-l-0 bg-linear-to-b from-[#dedede] to-[#cfcfcf] h-[21px] rounded-tr-[3px]';

export default function App() {
  return (
    <div className="h-[878px] w-[1600px] overflow-hidden bg-white pl-[6px] font-['Noto_Sans',sans-serif] text-[12.5px] leading-none text-[#3c4144]">
      <Gradients />
      <div className="relative flex h-[866px] w-[1594px] flex-col overflow-hidden border-b border-l border-[#3a3a3a] bg-[#ececec]">
        {/* title bar */}
        <div className="relative flex h-[22px] shrink-0 items-center bg-linear-to-b from-[#ebebeb] to-[#d2d2d2] pl-[8px]">
          <div className="flex gap-[8px]">
            <i className="size-[12px] rounded-full border border-[#e2463f] bg-[#fc5753]" />
            <i className="size-[12px] rounded-full border border-[#dfa023] bg-[#fdbc40]" />
            <i className="size-[12px] rounded-full border border-[#24a732] bg-[#33c748]" />
          </div>
          <div className="ml-[642px] flex items-center gap-[7px]">
            <svg width="14" height="14" viewBox="0 0 14 14" fill="none">
              <rect x=".5" y=".5" width="13" height="13" fill="#f6f6f6" stroke="#999" />
              <path d="M2.500 2h2.800l6.200 10H8.700z" fill="#333" />
              <path d="M11 2L3 12" stroke="#444" strokeWidth=".9" />
            </svg>
            <span className="pt-[1px] text-[13px] tracking-[0.05px] whitespace-nowrap text-[#2f2f2f]">New document 6 - Inkscape</span>
          </div>
        </div>

        {/* menu bar */}
        <div className="flex h-[21px] shrink-0">
          {menus.map(([m, c]) => (
            <div key={m} className={`flex shrink-0 items-center pt-[2px] pl-[6px] whitespace-nowrap ${c}`}>
              {m}
            </div>
          ))}
        </div>

        {/* command bar */}
        <div className="flex h-[36px] shrink-0 items-center pl-[292px]">
          <Slot><CutIcon /></Slot>
          <Slot><PasteIcon /></Slot>
          <BarSep />
          <Slot><ZoomSel /></Slot>
          <Slot><ZoomDraw /></Slot>
          <Slot><ZoomPage /></Slot>
          <BarSep />
          <Slot><Dup /></Slot>
          <Slot><DupLock /></Slot>
          <Slot><DupUnlock /></Slot>
          <BarSep />
          <Slot><GroupIcon /></Slot>
          <Slot><UngroupIcon /></Slot>
          <BarSep />
          <Slot><FillStrokeIcon /></Slot>
          <Slot><TextIcon /></Slot>
          <Slot><LayersIcon /></Slot>
          <Slot><XmlIcon /></Slot>
          <Slot><AlignIcon /></Slot>
          <BarSep />
          <Slot><DocPropsIcon /></Slot>
          <Slot><ToolsIcon /></Slot>
        </div>

        {/* tool controls */}
        <div className="flex h-[36px] shrink-0 items-center pl-[286px] text-[12px] text-[#aeaeac]">
          <StackIcon />
          <div className="ml-[12px]"><StackIcon /></div>
          <div className="ml-[11px] h-[18px] w-px bg-[#c4c4c4]" />
          <span className="ml-[13px] w-[16px]">X:</span>
          <Spin value="0.000" w="w-[61px]" />
          <span className="ml-[8px] w-[16px]">Y:</span>
          <Spin value="0.000" w="w-[61px]" />
          <span className="ml-[8px] w-[18px]">W:</span>
          <Spin value="0.000" w="w-[61px]" />
          <div className="ml-[9px] w-[27px]"><LockIcon /></div>
          <span className="w-[16px]">H:</span>
          <Spin value="0.000" w="w-[61px]" />
          <div className="ml-[1px] flex h-[23px] w-[43px] items-center justify-between rounded-[3px] border border-[#b9b9b9] bg-linear-to-b from-[#f6f6f6] to-[#dadada] pr-[5px] pl-[4px] text-[#3c4144]">
            px <Chevron />
          </div>
          <div className="ml-[6px] h-[18px] w-px bg-[#c4c4c4]" />
          <div className="ml-[6px] flex gap-[2px]">
            {[0, 1, 2, 3].map((i) => (
              <div key={i} className={`flex h-[27px] w-[26px] items-center justify-center ${pressed}`}>
                <AffectIcon i={i} />
              </div>
            ))}
          </div>
        </div>

        {/* work area */}
        <div className="flex h-[695px] shrink-0">
          {/* toolbox */}
          <div className="flex w-[40px] shrink-0 flex-col items-center pt-[294px] pr-[1px]">
            {toolbox.map((t) => (
              <div key={t.key} className={`flex w-full shrink-0 items-center justify-center ${t.h}`}>
                <Svg s={24} vb={24}>{t.icon}</Svg>
              </div>
            ))}
          </div>

          {/* rulers and canvas */}
          <div className="flex w-[1191px] shrink-0 flex-col">
            <div className="h-[14px] pl-[15px]"><HRuler /></div>
            <div className="flex h-[681px]">
              <div className="shrink-0"><VRuler /></div>
              <div className="relative h-full w-[1176px] overflow-hidden bg-white">
                <div className="absolute top-[154px] left-[617px] h-[369px] w-[261px] border border-[#777] shadow-[2px_2px_0_#666]" />
                <div className="absolute top-[30px] left-[461px] text-[37.5px] leading-[47px] whitespace-nowrap text-[#ff0000] font-['DejaVu_Sans']">
                  Save as (.svg, .pdf etc)
                </div>
                <div className="absolute top-[190px] left-[360px] w-[600px] text-center text-[37.5px] leading-[47px] whitespace-nowrap text-[#ff0000] font-['DejaVu_Sans']">
                  Export .png (options appear in
                  <br />
                  bottom right)
                </div>
                <svg className="absolute top-0 left-0" width="400" height="220" viewBox="62 129 400 220" fill="none">
                  <path d="M310 162l31-15.700-3.500 13.200 107 23-8 26L334.500 181l-6 9.500z" fill="#f00" stroke="#111" />
                  <path d="M311 259.500l33.700-8.200-6 12 99.300 46.200-13 23-93.500-49.200-8 8.700z" fill="#f00" stroke="#111" />
                </svg>
              </div>
            </div>
          </div>

          {/* dock handle */}
          <div className="flex w-[5px] shrink-0 flex-col items-center justify-center gap-[3px]">
            {[0, 1, 2, 3, 4].map((i) => (
              <i key={i} className="size-[2px] bg-[#c0c0c0]" />
            ))}
          </div>

          {/* dock */}
          <div className="flex w-[307px] shrink-0 flex-col border-t border-l border-[#b0b0b0] pl-[3px] shadow-[inset_1px_0_0_#dcdcdc]">
            <div className="flex h-[28px] shrink-0 items-center pt-[2px] pr-[10px]">
              <HistoryIcon />
              <span className="ml-[1px] flex-1 pt-[1px] tracking-[0.07px] whitespace-nowrap">Undo History (Shift+Ctrl+H)</span>
              <TitleButtons />
            </div>
            <div className="h-[419px] w-[300px] shrink-0 rounded-[2px] border border-[#b8b8b8] p-[3px]">
              <div className="h-full bg-white">
                <div className="flex h-[25px] items-center bg-[#3a81cc] pl-[80px] tracking-[-0.25px] text-[#e8f0f8]">[Unchanged]</div>
              </div>
            </div>
            <div className="mt-[2px] ml-[2px] flex h-[21px] w-[297px] shrink-0 items-center rounded-[3px] border border-[#bbb] bg-linear-to-b from-[#f7f7f7] to-[#dedede] pr-[5px] pl-[1px]">
              <ExportIcon />
              <span className="ml-[3px] flex-1 pt-[2px] tracking-[0.05px]">Export PNG Image (Shift+Ctrl+E)</span>
              <span className="rotate-180"><Chevron /></span>
            </div>
            <div className="mt-[3px] ml-[2px] flex h-[21px] w-[297px] shrink-0 items-center rounded-[3px] border border-[#b4b6b4] bg-linear-to-b from-[#a5aaa5] to-[#dcdedc] pr-[5px] pl-[1px]">
              <HistoryIcon />
              <span className="ml-[3px] flex-1 pt-[2px] tracking-[0.07px]">Undo History (Shift+Ctrl+H)</span>
              <span className="rotate-180"><Chevron /></span>
            </div>
            <div className="flex h-[13px] shrink-0 items-center justify-center gap-[4px] pr-[6px]">
              {[0, 1, 2, 3, 4].map((i) => (
                <i key={i} className="size-[2px] bg-[#c0c0c0]" />
              ))}
            </div>
            <div className="-ml-[1px] flex h-[22px] shrink-0 items-center pr-[9px] pb-[2px]">
              <FillStrokeIcon />
              <span className="ml-[1px] flex-1 tracking-[0.14px]">Fill and Stroke (Shift+Ctrl+F)</span>
              <TitleButtons />
            </div>
            <div className="-ml-[1px] flex min-h-0 w-[301px] flex-1 flex-col border border-b-0 border-[#b8b8b8] px-[3px] pt-[3px]">
              <div className="z-10 -mb-px flex h-[26px] shrink-0 items-end">
                <div className="flex h-[26px] w-[49px] items-center rounded-t-[3px] border border-t-2 border-b-0 border-[#b5b5b5] border-t-[#4a90e2] bg-white pl-[6px]">
                  <svg width="12" height="12" viewBox="0 0 12 12"><rect width="12" height="12" fill="url(#blue)" /></svg>
                  <span className="ml-[5px]">Fill</span>
                </div>
                <div className={`${tabBase} w-[103px] pl-[6px]`}>
                  <svg width="12" height="12" viewBox="0 0 12 12" fill="none"><rect x="1" y=".6" width="10" height="10.800" stroke="url(#frame)" strokeWidth="1.300" /></svg>
                  <span className="ml-[5px] pb-[1px] tracking-[0.1px] whitespace-nowrap">Stroke paint</span>
                </div>
                <div className={`${tabBase} w-[101px] pl-[5px]`}>
                  <svg width="13" height="12" viewBox="0 0 13 12" fill="none">
                    <path d="M0 2h11" stroke="#111" strokeWidth="1.200" />
                    <path d="M9.500 0l3.500 2-3.500 2z" fill="#111" />
                    <path d="M0 6.500h13" stroke="#111" strokeWidth="1.300" strokeDasharray="2 1" />
                    <path d="M0 11h13" stroke="#111" strokeWidth="1.200" />
                  </svg>
                  <span className="ml-[5px] pb-[1px] whitespace-nowrap">Stroke style</span>
                </div>
              </div>
              <div className="w-[293px] flex-1 border border-b-0 border-[#b5b5b5] bg-white">
                <div className="flex h-[42px] items-center pl-[10px]">
                  <div className="flex w-[28px] justify-center">
                    <svg width="10" height="10" viewBox="0 0 10 10" fill="none"><path d="M1.500 1.500l7 7M8.500 1.500l-7 7" stroke="#333" strokeWidth="1.800" /></svg>
                  </div>
                  <div className="flex w-[28px] justify-center"><PaintSwatch /></div>
                  <div className="flex w-[28px] justify-center">
                    <PaintSwatch><rect x="2" y="2" width="14" height="14" fill="url(#blue)" /></PaintSwatch>
                  </div>
                  <div className="flex w-[28px] justify-center">
                    <PaintSwatch><rect x="2" y="2" width="14" height="14" fill="url(#radial)" /></PaintSwatch>
                  </div>
                  <div className="flex w-[28px] justify-center">
                    <PaintSwatch>
                      <g fill="#e2eaf2">
                        <circle cx="5" cy="5" r="2.400" /><circle cx="12" cy="5" r="2.400" />
                        <circle cx="8.500" cy="11.500" r="2.400" /><circle cx="3" cy="12" r="1.800" /><circle cx="14" cy="12" r="2" />
                      </g>
                    </PaintSwatch>
                  </div>
                  <div className="flex w-[28px] justify-center">
                    <PaintSwatch><rect x="4" y="4" width="10" height="10" fill="#e6e8ea" stroke="#8a97a6" /></PaintSwatch>
                  </div>
                  <div className="flex w-[28px] justify-center text-[19px] leading-none font-bold text-[#333] font-['DejaVu_Sans']">?</div>
                  <div className="ml-[28px] flex h-[27px] w-[22px] items-center justify-center rounded-[3px] border border-[#c3c3c3] bg-[#f2f2f0]">
                    <svg width="13" height="13" viewBox="0 0 14 14" fill="none">
                      <path d="M4 1l2 2.500L5 6C4 8.500 5 10.500 7 10.500S10 8.500 9 6L8 3.500 10 1c4 0 4.500 5 3 8.500-1 3-3.500 4-6 4s-5-1-6-4C-.5 6 0 1 4 1z" fill="#222" />
                    </svg>
                  </div>
                  <div className="ml-[6px]">
                    <svg width="13" height="13" viewBox="0 0 14 14"><path d="M3.500 1L7 3l3.500-2C14 1 14.500 6 13 8.500c-1.500 2.500-4 5-6 5s-4.500-2.500-6-5C-.5 6 0 1 3.500 1z" fill="#333" /></svg>
                  </div>
                </div>
                <div className="mt-[3px] pl-[10px] font-bold tracking-[0.15px]">No objects</div>
              </div>
            </div>
          </div>

          {/* dock scrollbar */}
          <div className="flex w-[12px] shrink-0 justify-center bg-[#d6d6d6] pt-[3px]">
            <div className="h-[557px] w-[7px] rounded-full bg-[#9c9d9f]" />
          </div>

          {/* snap bar */}
          <div className="flex flex-1 flex-col items-center pt-[4px] pr-[5px] pl-[6px]">
            {snapItems.map((it, i) =>
              it.sep ? (
                <div key={i} className={`flex w-[18px] shrink-0 items-center ${it.h}`}>
                  <div className="h-px w-full bg-[#bcbcbc]" />
                </div>
              ) : (
                <div key={i} className={`flex w-[26px] shrink-0 items-center justify-center ${it.h} ${it.on ? pressed : ''}`}>
                  <Svg>{it.el}</Svg>
                </div>
              ),
            )}
          </div>
        </div>

        {/* palette */}
        <div className="flex h-[15px] shrink-0">
          <div className="flex h-[14px] w-[1581px] overflow-hidden border-t border-[#aaa]">
            <svg width="14" height="13" viewBox="0 0 14 13" className="shrink-0 bg-white">
              <path d="M.5.500l13 12M13.500.500l-13 12" stroke="#8c2020" strokeWidth="1.200" />
            </svg>
            {palette.map((c, i) => (
              <div key={i} className="h-[13px] w-[13px] shrink-0" style={{ backgroundColor: `#${c}` }} />
            ))}
          </div>
          <svg width="7" height="10" viewBox="0 0 7 10" fill="none" className="mt-[1px] ml-[3px]">
            <path d="M5.500 1L1.500 5l4 4" stroke="#888" strokeWidth="1.900" />
          </svg>
        </div>

        {/* horizontal scrollbar */}
        <div className="mt-[1px] flex h-[13px] w-[1582px] shrink-0 items-center bg-[#d6d6d6] pl-[3px]">
          <div className="h-[7px] w-[438px] rounded-full bg-[#9c9c9c]" />
        </div>

        {/* status bar */}
        <div className="flex h-[26px] shrink-0 items-center pl-[2px]">
          <div className="w-[69px] pt-[1px] text-[11.500px] leading-[12px]">Fill:<br />Stroke:</div>
          <div className="w-[55px] pt-[1px] text-[11.500px] leading-[12px]">N/A<br />N/A</div>
          <span className="w-[14px] pt-[1px]">O:</span>
          <Spin value="0" w="w-[47px]" />
          <div className="ml-[2px] h-full w-px bg-[#b0b0b0]" />
          <svg width="12" height="12" viewBox="0 0 12 12" fill="none" className="ml-[4px]">
            <path d="M.5 6.500C3 3 9 3 11.500 6.500 9 10.500 3 10.500.500 6.500z" fill="#ccc" stroke="#222" strokeWidth="1.300" />
            <circle cx="6" cy="6.800" r="2.500" fill="#111" />
            <path d="M2 3.500L1 1.800M4.500 2.700L4 .8M7.500 2.700L8 .8M10 3.500l1-1.700" stroke="#222" strokeWidth="1.200" />
          </svg>
          <div className="ml-[7px]"><LockIcon /></div>
          <div className="ml-[3px] flex h-[23px] w-[75px] items-center justify-between rounded-[3px] border border-[#b9b9b9] bg-linear-to-b from-[#f6f6f6] to-[#dadada] pt-[1px] pr-[5px] pl-[5px] text-[11.500px] font-semibold tracking-[-0.3px] whitespace-nowrap">
            •Layer 1 <Chevron />
          </div>
          <span className="ml-[5px] flex-1 pt-[2px] tracking-[0.17px] whitespace-nowrap">
            No objects selected. Click, Shift+click, Alt+scroll mouse on top of objects, or drag around objects to select.
          </span>
          <div className="h-full w-px bg-[#b0b0b0]" />
          <div className="ml-[2px] flex w-[61px] justify-between pt-[1px] text-[11.500px] leading-[12px]">
            <div>X:<br />Y:</div>
            <div className="text-right font-['DejaVu_Sans_Mono'] text-[11px] tracking-[-0.6px]">-1402.86<br />1488.57</div>
          </div>
          <span className="ml-[7px] w-[14px] pt-[2px]">Z:</span>
          <Spin value="35%" w="w-[56px]" live pad="pl-[10px] pt-[2px]" />
          <svg width="14" height="15" viewBox="0 0 14 15" fill="none" className="ml-[4px] self-end bg-white">
            <path d="M3 14L14 3M7 14l7-7M11 14l3-3" stroke="#888" strokeWidth="1.300" />
          </svg>
        </div>

        {/* File menu popup */}
        <div className="absolute top-[43px] left-0 z-20 flex h-[365px] w-[297px] flex-col border-r border-b border-[#c4c4c4] bg-white">
          {fileMenu.map((it, i) =>
            it === 'sep' ? (
              <div key={i} className="h-[10px] shrink-0 px-[5px] pt-[3px]">
                <div className="h-px bg-[#e2e2e2]" />
              </div>
            ) : (
              <div key={i} className="flex h-[21px] shrink-0 items-center pr-[7px] pl-[5px]">
                <span className="w-[20.5px]">{it.icon}</span>
                <span className="flex-1 pt-[2px] tracking-[-0.15px] whitespace-nowrap">{it.label}</span>
                {it.keys && <span className="-mr-[0.3px] pt-[2px] tracking-[0.35px] whitespace-nowrap">{it.keys}</span>}
                {it.sub && (
                  <svg width="6" height="9" viewBox="0 0 6 9" fill="none" className="-mr-[4px]">
                    <path d="M1 1l3.500 3.500L1 8" stroke="#3c4144" strokeWidth="1.600" />
                  </svg>
                )}
              </div>
            ),
          )}
        </div>
      </div>
    </div>
  );
}
